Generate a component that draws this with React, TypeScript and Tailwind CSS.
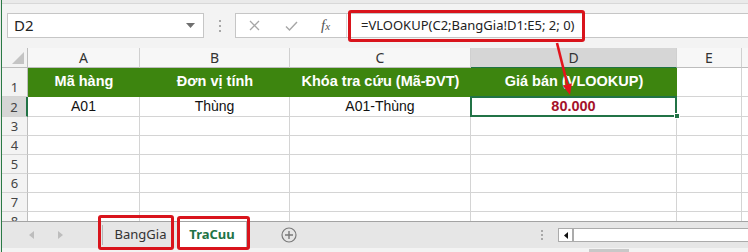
import React from "react";

const COLS = [112, 150, 181, 206, 65];
const LETTERS = ["A", "B", "C", "D", "E"];
const GREEN_HEAD = ["Mã hàng", "Đơn vị tính", "Khóa tra cứu (Mã-ĐVT)", "Giá bán (VLOOKUP)"];
const ROW2 = ["A01", "Thùng", "A01-Thùng"];

const ui = "font-['Noto_Sans','Open_Sans',sans-serif]";
const cellFont = "font-['Liberation_Sans',Arial,sans-serif]";

function RowHead({ n, h, selected }: { n: string; h: number; selected?: boolean }) {
  return (
    <div
      className={`w-[26px] shrink-0 flex items-end justify-center border-b border-[#d4d4d4] text-[13px] leading-[18px] text-[#444] ${ui} ${
        selected ? "bg-[#d6d6d6] border-r-2 border-r-[#217346]" : "bg-[#f3f3f3] border-r border-r-[#bdbdbd]"
      }`}
      style={{ height: h }}
    >
      {n}
    </div>
  );
}

function BlankRow({ n }: { n: string }) {
  return (
    <div className="flex h-[19px] shrink-0">
      <RowHead n={n} h={19} />
      {COLS.map((w, i) => (
        <div key={i} className="shrink-0 border-r border-b border-[#d4d4d4] bg-white" style={{ width: w }} />
      ))}
      <div className="flex-1 border-b border-[#d4d4d4] bg-white" />
    </div>
  );
}

export default function App() {
  return (
    <div className="relative w-[748px] h-[252px] overflow-hidden flex bg-[#f3f3f3]">
      <div className="w-[1px] bg-[#e8e8e8]" />
      <div className="w-[1px] bg-[#2a7a45]" />
      <div className="flex-1 flex flex-col min-w-0">
        {/* top strip */}
        <div className="h-[4px] bg-[#eaeaea] border-b border-[#d8d8d8]" />

        {/* formula bar */}
        <div className="h-[44px] flex items-start pt-[9px]">
          <div className={`ml-[5px] w-[197px] h-[25px] bg-white border border-[#c6c6c6] flex items-center pl-[6px] pr-[8px] text-[15px] text-[#222] ${ui}`}>
            <span className="flex-1">D2</span>
            <svg width="9" height="5" viewBox="0 0 9 5">
              <path d="M0 0h9L4.5 5z" fill="#6f6f6f" />
            </svg>
          </div>
          <div className="w-[31px] h-[25px] flex flex-col items-center justify-center gap-[3px]">
            <span className="w-[2px] h-[2px] bg-[#a8a8a8]" />
            <span className="w-[2px] h-[2px] bg-[#a8a8a8]" />
            <span className="w-[2px] h-[2px] bg-[#a8a8a8]" />
          </div>
          <div className="flex-1 h-[25px] bg-white border border-[#c6c6c6] border-r-0 flex items-center">
            <div className="w-[110px] flex items-center h-full">
              <svg className="ml-[13px]" width="11" height="11" viewBox="0 0 11 11">
                <path d="M1 1l9 9M10 1l-9 9" stroke="#a6a6a6" strokeWidth="1.3" />
              </svg>
              <svg className="ml-[25px]" width="13" height="10" viewBox="0 0 13 10">
                <path d="M1 5.5l3.5 3.5L12 1" stroke="#a6a6a6" strokeWidth="1.4" fill="none" />
              </svg>
              <span className="ml-[23px] italic font-['Liberation_Serif',serif] text-[15px] text-[#555] leading-none">
                f<span className="text-[11px]">x</span>
              </span>
            </div>
            <div className="w-px h-full bg-[#dcdcdc]" />
            <span className={`ml-[14px] text-[13px] text-[#222] whitespace-nowrap ${ui}`}>
              =VLOOKUP(C2;BangGia!D1:E5; 2; 0)
            </span>
          </div>
        </div>

        {/* grid */}
        <div className="h-[173px] overflow-hidden flex flex-col bg-white">
          <div className="flex h-[20px] shrink-0">
            <div className="relative w-[26px] shrink-0 bg-[#f3f3f3] border-r border-b border-[#bdbdbd]">
              <svg className="absolute right-[3px] bottom-[3px]" width="12" height="12" viewBox="0 0 12 12">
                <path d="M12 0V12H0z" fill="#c4c4c4" />
              </svg>
            </div>
            {COLS.map((w, i) => (
              <div
                key={i}
                className={`shrink-0 flex items-center justify-center border-r border-b border-[#d0d0d0] text-[14px] text-[#333] ${ui} ${
                  i === 3 ? "bg-[#d6d6d6] border-b-[#217346]" : "bg-[#f7f7f7] border-b-[#bdbdbd]"
                }`}
                style={{ width: w }}
              >
                {LETTERS[i]}
              </div>
            ))}
            <div className="flex-1 bg-[#f7f7f7] border-b border-[#bdbdbd]" />
          </div>

          {/* row 1 */}
          <div className="flex h-[29px] shrink-0">
            <RowHead n="1" h={29} />
            {GREEN_HEAD.map((t, i) => (
              <div
                key={i}
                className={`shrink-0 flex items-center justify-center bg-[#3d850f] border-b border-[#3d850f] text-white font-bold text-[14.5px] whitespace-nowrap ${cellFont}`}
                style={{ width: COLS[i] }}
              >
                {t}
              </div>
            ))}
            <div className="w-[65px] shrink-0 border-r border-b border-[#d4d4d4]" />
            <div className="flex-1 border-b border-[#d4d4d4]" />
          </div>

          {/* row 2 */}
          <div className="flex h-[20px] shrink-0">
            <RowHead n="2" h={20} selected />
            {ROW2.map((t, i) => (
              <div
                key={i}
                className={`shrink-0 flex items-center justify-center border-r border-b border-[#d4d4d4] text-[14px] text-[#111] ${cellFont}`}
                style={{ width: COLS[i] }}
              >
                {t}
              </div>
            ))}
            <div className="relative w-[206px] shrink-0 flex items-center justify-center border-r border-b border-[#d4d4d4]">
              <div className="absolute -left-[1px] -top-[1px] -right-[1px] -bottom-[1px] border-2 border-[#217346]" />
              <div className="absolute -right-[4px] -bottom-[3px] w-[6px] h-[6px] bg-[#217346] border border-white" />
              <span className={`text-[14.5px] font-bold text-[#a4122a] ${cellFont}`}>80.000</span>
            </div>
            <div className="w-[65px] shrink-0 border-r border-b border-[#d4d4d4]" />
            <div className="flex-1 border-b border-[#d4d4d4]" />
          </div>

          {["3", "4", "5", "6", "7", "8"].map((n) => (
            <BlankRow key={n} n={n} />
          ))}
        </div>

        {/* sheet tabs */}
        <div className={`h-[27px] flex items-stretch bg-[#e6e6e6] border-t border-[#a3a3a3] ${ui}`}>
          <div className="w-[100px] flex items-center">
            <svg className="ml-[27px]" width="5" height="8" viewBox="0 0 5 8">
              <path d="M5 0v8L0 4z" fill="#bdbdbd" />
            </svg>
            <svg className="ml-[24px]" width="5" height="8" viewBox="0 0 5 8">
              <path d="M0 0v8L5 4z" fill="#bdbdbd" />
            </svg>
          </div>
          <div className="w-[76px] flex items-center justify-center border-l border-[#b5b5b5] my-[3px] text-[13px] text-[#333]">
            BangGia
          </div>
          <div className="w-[69px] flex items-center justify-center bg-white border-r border-[#b5b5b5] text-[13px] font-bold text-[#217346]">
            TraCuu
          </div>
          <div className="w-[81px] flex items-center justify-center pl-[2px]">
            <svg width="16" height="16" viewBox="0 0 16 16">
              <circle cx="8" cy="8" r="7" stroke="#7a7a7a" strokeWidth="1.2" fill="none" />
              <path d="M8 4v8M4 8h8" stroke="#7a7a7a" strokeWidth="1.4" />
            </svg>
          </div>
          <div className="w-[206px]" />
          <div className="w-[16px] flex flex-col items-center justify-center gap-[2px]">
            <span className="w-[2px] h-[2px] bg-[#a8a8a8]" />
            <span className="w-[2px] h-[2px] bg-[#a8a8a8]" />
            <span className="w-[2px] h-[2px] bg-[#a8a8a8]" />
          </div>
          <div className="flex-1 flex items-center pl-[8px]">
            <div className="w-full h-[14px] bg-white border border-[#ababab] border-r-0 flex">
              <div className="w-[15px] flex items-center justify-center border-r-2 border-[#ababab]">
                <svg width="4" height="7" viewBox="0 0 4 7">
                  <path d="M4 0v7L0 3.5z" fill="#111" />
                </svg>
              </div>
            </div>
          </div>
        </div>
        <div className="h-[4px] bg-[#f3f3f3] relative">
          <div className="absolute left-[587px] top-[1px] w-[40px] h-[3px] bg-[#c8c8c8]" />
        </div>
      </div>

      {/* annotations */}
      <div className="absolute left-[348px] top-[10px] w-[237px] h-[32px] border-[3px] border-[#d9141c] rounded-[3px] pointer-events-none" />
      <div className="absolute left-[98px] top-[215px] w-[76px] h-[35px] border-[3px] border-[#d9141c] rounded-[3px] pointer-events-none" />
      <div className="absolute left-[177px] top-[216px] w-[73px] h-[34px] border-[3px] border-[#d9141c] rounded-[3px] pointer-events-none" />
      <svg className="absolute left-0 top-0 pointer-events-none" width="748" height="252" viewBox="0 0 748 252">
        <line x1="557" y1="43" x2="567.3" y2="84.3" stroke="#e3141c" strokeWidth="2.6" />
        <polygon points="570,95 571.9,83.2 562.7,85.4" fill="#e3141c" />
      </svg>
    </div>
  );
}
